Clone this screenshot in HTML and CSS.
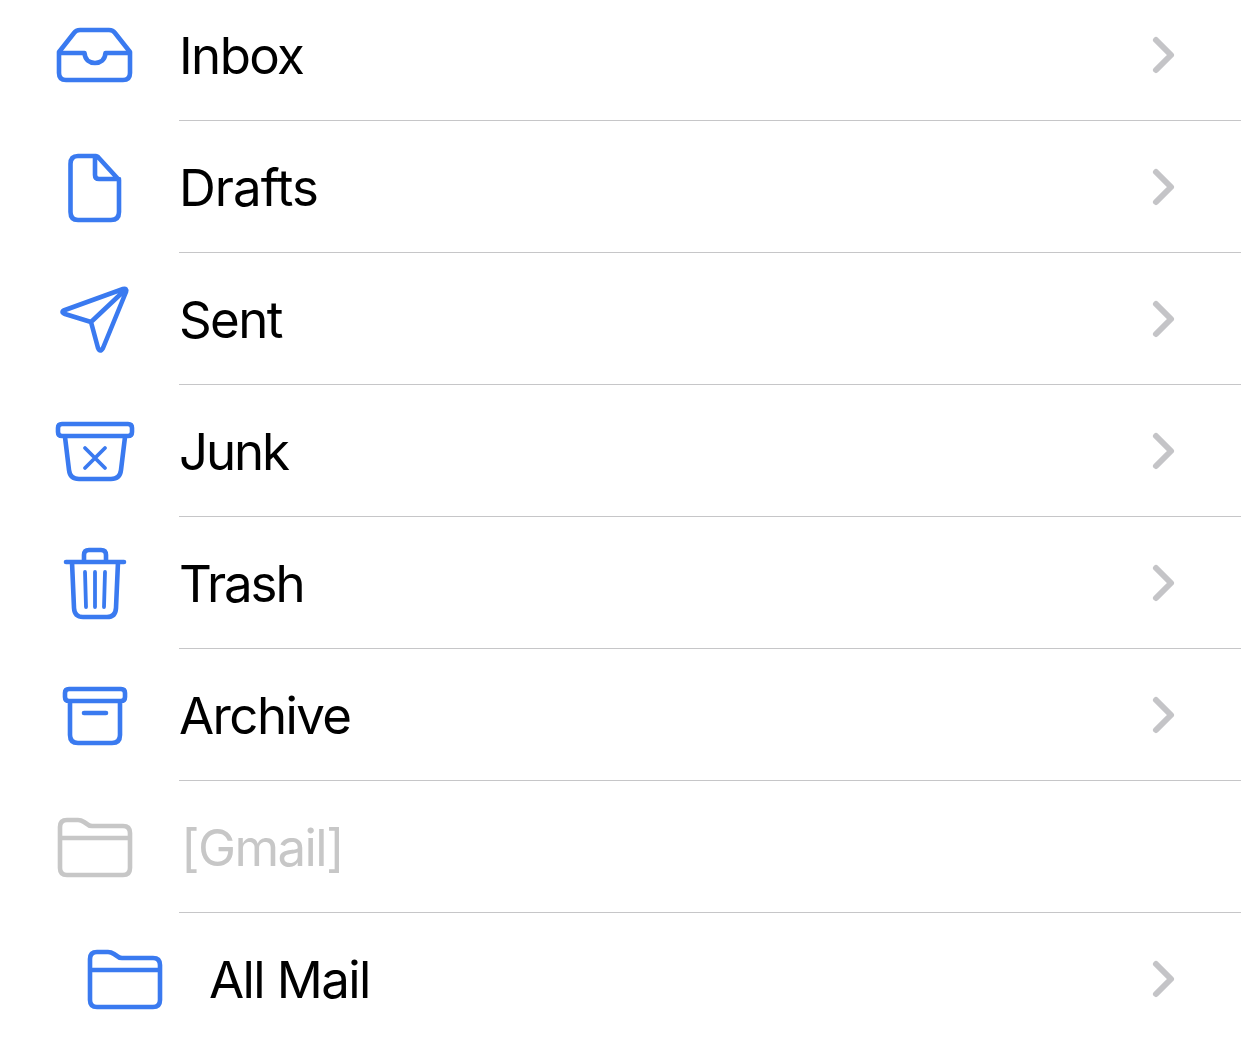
FILE: index.html
```html
<!DOCTYPE html>
<html lang="en">
<head>
<meta charset="utf-8">
<title>Mailboxes</title>
<link rel="stylesheet" href="styles.css">
</head>
<body>
<ul class="list">
  <li class="row">
    <svg class="icon" viewBox="50 14 90 82"><path d="M59 52 L74 33 Q76 30 80 30 H109 Q113 30 115 33 L130 52 V73 Q130 80 123 80 H66 Q59 80 59 73 Z M59 53 H84.500 C85 60 90 63 95 63 C100 63 105 60 105.500 53 H130"/></svg>
    <div class="body"><span class="name">Inbox</span><svg class="chev" viewBox="0 0 30 41"><path d="M8 6 L23 21 L8 36"/></svg></div>
  </li>
  <li class="row">
    <svg class="icon" viewBox="50 146 90 82"><path d="M96 156 H78 Q70.500 156 70.500 164 V212 Q70.500 220 78 220 H111 Q119 220 119 212 V180 L98 157 Q97 156 96 156 Z M95 156 V175 Q95 179 99 179 H119"/></svg>
    <div class="body"><span class="name wide">Drafts</span><svg class="chev" viewBox="0 0 30 41"><path d="M8 6 L23 21 L8 36"/></svg></div>
  </li>
  <li class="row">
    <svg class="icon" viewBox="50 278 90 82"><path d="M123 289 Q127 288 126 292 L103 348 Q100 353 98 348 L91 322 L65 314 Q60 312 65 310 Z M91 322 L125 290"/></svg>
    <div class="body"><span class="name">Sent</span><svg class="chev" viewBox="0 0 30 41"><path d="M8 6 L23 21 L8 36"/></svg></div>
  </li>
  <li class="row">
    <svg class="icon" viewBox="50 410 90 82"><path d="M62 424 H128 Q132 424 132 428 V432 Q132 436 128 436 H62 Q58 436 58 432 V428 Q58 424 62 424 Z M65 437 L69 470 Q70 479 79 479 H111 Q120 479 121 470 L125 437"/><path class="thin" d="M85 448 L105 468 M105 448 L85 468"/></svg>
    <div class="body"><span class="name tight">Junk</span><svg class="chev" viewBox="0 0 30 41"><path d="M8 6 L23 21 L8 36"/></svg></div>
  </li>
  <li class="row">
    <svg class="icon" viewBox="50 542 90 82"><path d="M66 562 H124 M84 561 V555 Q84 550 89 550 H101 Q106 550 106 555 V561 M72 562 L74 608 Q74.500 617 83 617 H107 Q115.500 617 116 608 L118 562"/><path class="thin" d="M85 572 L86 607 M95 572 V607 M105 572 L104 607"/></svg>
    <div class="body"><span class="name tight">Trash</span><svg class="chev" viewBox="0 0 30 41"><path d="M8 6 L23 21 L8 36"/></svg></div>
  </li>
  <li class="row">
    <svg class="icon" viewBox="50 674 90 82"><path d="M69 689 H121 Q125 689 125 693 V697 Q125 701 121 701 H69 Q65 701 65 697 V693 Q65 689 69 689 Z M70 702 V735 Q70 743 78 743 H112 Q120 743 120 735 V702 M84 713 H106"/></svg>
    <div class="body"><span class="name">Archive</span><svg class="chev" viewBox="0 0 30 41"><path d="M8 6 L23 21 L8 36"/></svg></div>
  </li>
  <li class="row muted">
    <svg class="icon" viewBox="50 806 90 82"><path d="M60 827 Q60 820 67 820 H78 Q81 820 84 822 L87 824 Q89 826 92 826 H123 Q130 826 130 833 V868 Q130 875 123 875 H67 Q60 875 60 868 Z M60 838 H130"/></svg>
    <div class="body"><span class="name bracket">[Gmail]</span></div>
  </li>
  <li class="row nested">
    <svg class="icon" viewBox="50 806 90 82"><path d="M60 827 Q60 820 67 820 H78 Q81 820 84 822 L87 824 Q89 826 92 826 H123 Q130 826 130 833 V868 Q130 875 123 875 H67 Q60 875 60 868 Z M60 838 H130"/></svg>
    <div class="body"><span class="name">All Mail</span><svg class="chev" viewBox="0 0 30 41"><path d="M8 6 L23 21 L8 36"/></svg></div>
  </li>
</ul>
</body>
</html>
```
FILE: styles.css
```css
html, body {
  margin: 0;
  height: 100%;
  overflow: hidden;
  background: #fff;
}
.list {
  list-style: none;
  margin: -11px 0 0;
  padding: 0;
}
.row {
  display: flex;
  height: 132px;
  padding-left: 50px;
  color: #000;
  font-family: Inter, "Liberation Sans", sans-serif;
  font-size: 51px;
  letter-spacing: -1.6px;
}
.row.nested {
  padding-left: 80px;
}
.icon {
  flex: none;
  align-self: center;
  width: 90px;
  height: 82px;
  margin-right: 39px;
  fill: none;
  stroke: #3a7af0;
  stroke-width: 4.600;
  stroke-linecap: round;
  stroke-linejoin: round;
}
.icon .thin {
  stroke-width: 3.800;
}
.muted {
  color: #c7c7c7;
}
.muted .icon {
  stroke: #c7c7c7;
}
.body {
  flex: 1;
  display: flex;
  align-items: center;
  justify-content: space-between;
  padding-right: 63px;
  border-bottom: 1px solid #c6c6c8;
}
.name {
  line-height: 60px;
  padding-top: 2px;
}
.wide {
  letter-spacing: -1px;
}
.tight {
  letter-spacing: -2.100px;
}
.bracket {
  padding-left: 2px;
}
.chev {
  flex: none;
  width: 30px;
  height: 41px;
  fill: none;
  stroke: #c4c4c7;
  stroke-width: 6;
  stroke-linecap: round;
  stroke-linejoin: round;
}
```
